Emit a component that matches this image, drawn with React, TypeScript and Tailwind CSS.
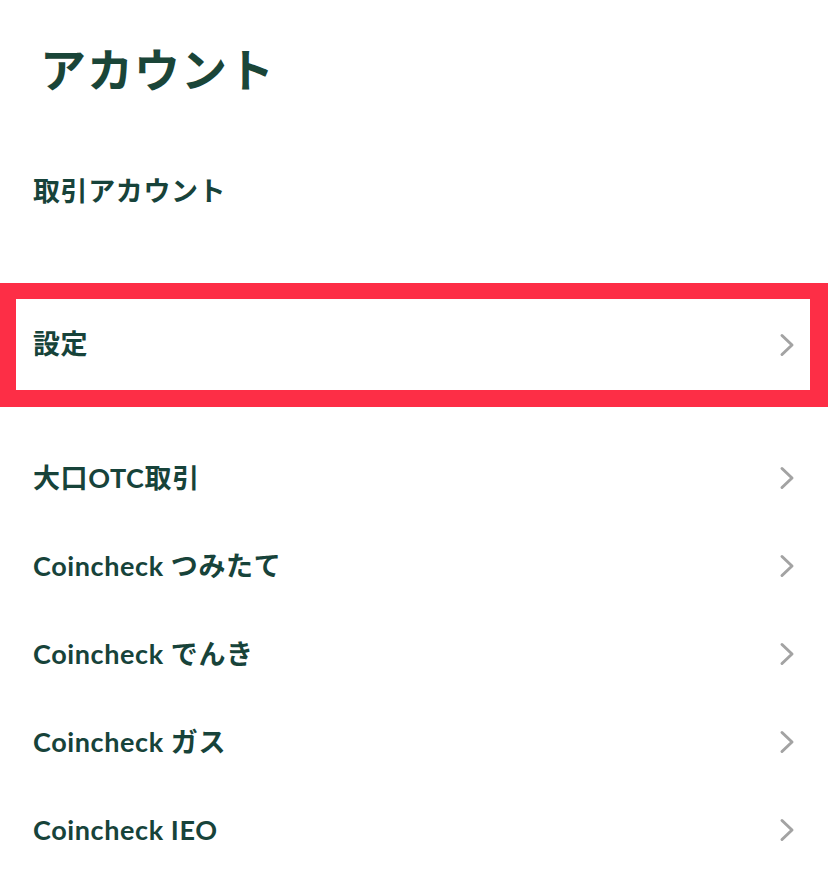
import React from 'react';

const Chevron: React.FC = () => (
  <svg width="16" height="24" viewBox="0 0 16 24" fill="none" className="shrink-0">
    <path d="M3 2.5 L13 12 L3 21.5" stroke="#a3a3a3" strokeWidth="3" strokeLinecap="round" strokeLinejoin="round" />
  </svg>
);

const Row: React.FC<{ label: string; arrow?: boolean; className?: string }> = ({ label, arrow = true, className = '' }) => (
  <div className={`flex items-center justify-between ${className}`}>
    <span className="text-[27px] font-bold text-[#17433a] tracking-[0.6px]">{label}</span>
    {arrow && <Chevron />}
  </div>
);

const items = ['大口OTC取引', 'Coincheck つみたて', 'Coincheck でんき', 'Coincheck ガス', 'Coincheck IEO'];

const App: React.FC = () => {
  return (
    <div className="w-[828px] h-[886px] bg-white overflow-hidden" style={{ fontFamily: 'Lato, "Noto Sans CJK JP", sans-serif' }}>
      {/* header */}
      <div className="h-[138px] flex items-center pl-[40px]">
        <h1 className="text-[46px] font-bold text-[#1a4538] tracking-[1px]">アカウント</h1>
      </div>

      <Row label="取引アカウント" arrow={false} className="h-[106px] pl-[33px] pr-[33px]" />

      <div className="h-[39px]" />

      {/* highlighted settings row */}
      <div className="border-l-[16px] border-r-[18px] border-t-[16px] border-b-[17px] border-[#fd2e46]">
        <Row label="設定" className="h-[91px] pl-[17px] pr-[15px]" />
      </div>

      <div className="h-[27px]" />

      {items.map((label) => (
        <Row key={label} label={label} className="h-[88px] pl-[33px] pr-[33px]" />
      ))}
    </div>
  );
};

export default App;
